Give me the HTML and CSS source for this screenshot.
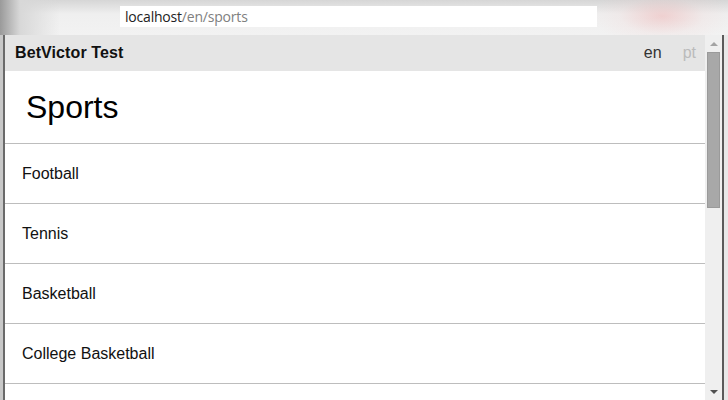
FILE: index.html
```html
<!DOCTYPE html>
<html lang="en">
<head>
<meta charset="utf-8">
<title>Sports</title>
<link rel="stylesheet" href="styles.css">
</head>
<body>
<div class="chrome">
  <div class="urlbar"><span class="host">localhost</span><span class="path">/en/sports</span></div>
</div>
<div class="window">
  <div class="edge-left"></div>
  <div class="viewport">
    <header class="topbar">
      <span class="brand">BetVictor Test</span>
      <nav class="langs"><span class="lang active">en</span><span class="lang">pt</span></nav>
    </header>
    <h1 class="title">Sports</h1>
    <ul class="list">
      <li class="item">Football</li>
      <li class="item">Tennis</li>
      <li class="item">Basketball</li>
      <li class="item">College Basketball</li>
      <li class="item item-empty"></li>
    </ul>
  </div>
  <div class="scrollbar">
    <div class="arrow up"></div>
    <div class="thumb"></div>
    <div class="track"></div>
    <div class="arrow down"></div>
  </div>
  <div class="edge-right"></div>
</div>
</body>
</html>
```
FILE: styles.css
```css
html, body {
  margin: 0;
  padding: 0;
  height: 400px;
  overflow: hidden;
  background: #fff;
}
.chrome {
  height: 35px;
  display: flex;
  align-items: flex-start;
  padding-left: 120px;
  box-sizing: border-box;
  padding-top: 6px;
  background:
    radial-gradient(ellipse 70px 30px at 662px 16px, rgba(238,170,170,0.45), rgba(240,200,200,0.15) 60%, rgba(240,210,210,0) 100%),
    linear-gradient(to right, #9a9a9a 0px, #d8d8d8 20px, rgba(240,240,240,0) 60px),
    linear-gradient(to bottom, #d6d6d6 0px, #efefef 14px, #f2f2f2 35px);
}
.urlbar {
  width: 477px;
  height: 21px;
  background: #fff;
  font-family: "Open Sans", "Noto Sans", sans-serif;
  font-size: 14px;
  line-height: 21px;
  padding-left: 5px;
  box-sizing: border-box;
  letter-spacing: -0.2px;
}
.host { color: #222; }
.path { color: #808080; }
.window {
  display: flex;
  height: 365px;
}
.edge-left {
  width: 5px;
  flex: none;
  background: #c8c8c8;
  border-right: 2px solid #6a6a6a;
  box-sizing: border-box;
}
.viewport {
  flex: 1;
  display: flex;
  flex-direction: column;
  font-family: "Liberation Sans", Arial, sans-serif;
  color: #111;
  overflow: hidden;
}
.topbar {
  height: 36px;
  flex: none;
  background: #e5e5e5;
  display: flex;
  align-items: center;
  justify-content: space-between;
  padding: 0 9px 0 10px;
}
.brand {
  font-weight: bold;
  font-size: 16px;
  color: #111;
  letter-spacing: 0.1px;
}
.langs {
  display: flex;
  gap: 21px;
  font-size: 16px;
}
.lang { color: #bbb; }
.lang.active { color: #333; }
.title {
  margin: 0;
  height: 73px;
  flex: none;
  box-sizing: border-box;
  padding-left: 21px;
  font-weight: normal;
  font-size: 32px;
  line-height: 72px;
  color: #000;
  border-bottom: 1px solid #bdbdbd;
}
.list {
  list-style: none;
  margin: 0;
  padding: 0;
}
.item {
  height: 60px;
  box-sizing: border-box;
  border-bottom: 1px solid #bdbdbd;
  padding-left: 17px;
  font-size: 16px;
  line-height: 60px;
  color: #111;
}
.scrollbar {
  width: 17px;
  flex: none;
  background: #efefef;
  display: flex;
  flex-direction: column;
  align-items: center;
}
.arrow {
  height: 17px;
  width: 17px;
  display: flex;
  align-items: center;
  justify-content: center;
  flex: none;
}
.arrow.up::before {
  content: "";
  border-left: 4px solid transparent;
  border-right: 4px solid transparent;
  border-bottom: 4px solid #a3a3a3;
}
.arrow.down::before {
  content: "";
  border-left: 4px solid transparent;
  border-right: 4px solid transparent;
  border-top: 4px solid #505050;
}
.thumb {
  width: 13px;
  height: 156px;
  background: #a8a8a8;
  border: 1px solid #9a9a9a;
  box-sizing: border-box;
  flex: none;
}
.track { flex: 1; }
.edge-right {
  width: 6px;
  flex: none;
  background: #e8e8e8;
  border-left: 2px solid #5a5a5a;
  box-sizing: border-box;
}
```
